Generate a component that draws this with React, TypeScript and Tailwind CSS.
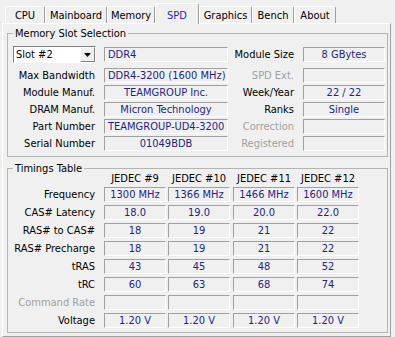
import React from "react";

const VAL = "text-[#1e1e8c]";
const SUNK = "border border-t-[#a0a0a0] border-l-[#a0a0a0] border-b-white border-r-white";

function Field({ className = "", left = false, children }: { className?: string; left?: boolean; children?: React.ReactNode }) {
  return (
    <div className={`h-[15px] ${SUNK} ${VAL} leading-[13px] whitespace-nowrap overflow-hidden ${left ? "pl-[3px] text-left" : "text-center"} ${className}`}>
      {children}
    </div>
  );
}

function Label({ className = "", dim = false, children }: { className?: string; dim?: boolean; children?: React.ReactNode }) {
  return (
    <div className={`leading-[15px] text-right whitespace-nowrap ${dim ? "text-[#a0a0a0]" : "text-black"} ${className}`}>{children}</div>
  );
}

const tabs = [
  { name: "CPU", w: "w-[40px]" },
  { name: "Mainboard", w: "w-[62px]" },
  { name: "Memory", w: "w-[48px]" },
  { name: "SPD", w: "w-[44px]", sel: true },
  { name: "Graphics", w: "w-[53px]" },
  { name: "Bench", w: "w-[42px]" },
  { name: "About", w: "w-[42px]" },
];

const slotRows = [
  { l: "Max Bandwidth", v: "DDR4-3200 (1600 MHz)", left: true, r: "SPD Ext.", rv: "", rdim: true },
  { l: "Module Manuf.", v: "TEAMGROUP Inc.", r: "Week/Year", rv: "22 / 22" },
  { l: "DRAM Manuf.", v: "Micron Technology", r: "Ranks", rv: "Single" },
  { l: "Part Number", v: "TEAMGROUP-UD4-3200", left: true, r: "Correction", rv: "", rdim: true },
  { l: "Serial Number", v: "01049BDB", r: "Registered", rv: "", rdim: true },
];

const timing = [
  { l: "Frequency", v: ["1300 MHz", "1366 MHz", "1466 MHz", "1600 MHz"] },
  { l: "CAS# Latency", v: ["18.0", "19.0", "20.0", "22.0"] },
  { l: "RAS# to CAS#", v: ["18", "19", "21", "22"] },
  { l: "RAS# Precharge", v: ["18", "19", "21", "22"] },
  { l: "tRAS", v: ["43", "45", "48", "52"] },
  { l: "tRC", v: ["60", "63", "68", "74"] },
  { l: "Command Rate", v: ["", "", "", ""], dim: true },
  { l: "Voltage", v: ["1.20 V", "1.20 V", "1.20 V", "1.20 V"] },
];

const colMl = ["ml-[9px]", "ml-[2px]", "ml-[3px]", "ml-[2px]"];

export default function App() {
  return (
    <div className="w-[395px] h-[337px] overflow-hidden bg-[#f0f0f0] font-['DejaVu_Sans_Condensed','Liberation_Sans',sans-serif] text-[11px] leading-[13px] text-black">
      {/* Tabs */}
      <div className="h-[23px] flex items-end pl-[5px]">
        {tabs.map((t) =>
          t.sel ? (
            <div
              key={t.name}
              className={`${t.w} relative z-10 h-[21px] -mb-[1px] bg-[#f0f0f0] border-l border-t border-r border-l-white border-t-white border-r-[#a0a0a0] rounded-t-[2px] pt-[5px] text-center text-[#1e1ec8]`}
            >
              {t.name}
            </div>
          ) : (
            <div
              key={t.name}
              className={`${t.w} h-[17px] bg-[#f0f0f0] border-l border-t border-r border-l-white border-t-white border-r-[#a0a0a0] rounded-t-[2px] pt-[2px] text-center`}
            >
              {t.name}
            </div>
          )
        )}
      </div>

      {/* Panel */}
      <div className="ml-[2px] w-[389px] h-[314px] border border-t-white border-l-white border-r-[#a0a0a0] border-b-[#a0a0a0] pl-[4px] pt-[3px]">
        {/* Memory Slot Selection */}
        <fieldset className="w-[381px] border border-[#b4b4b4] pb-[5px]">
          <legend className="ml-[5px] px-[2px] leading-[13px]">Memory Slot Selection</legend>
          <div className="mt-[6px] h-[17px] flex items-center">
            <div className="ml-[5px] w-[83px] h-[17px] bg-white border border-t-[#808080] border-l-[#808080] border-b-white border-r-white flex items-center">
              <div className="flex-1 pl-[2px] leading-[13px]">Slot #2</div>
              <div className="w-[15px] h-[15px] bg-[#f0f0f0] border border-t-white border-l-white border-b-[#808080] border-r-[#808080] flex items-center justify-center">
                <svg width="7" height="4" viewBox="0 0 7 4">
                  <path d="M0 0h7L3.5 4z" fill="#000" />
                </svg>
              </div>
            </div>
            <Field className="ml-[8px] w-[124px]" left>DDR4</Field>
            <Label className="w-[66px]">Module Size</Label>
            <Field className="ml-[9px] w-[82px]">8 GBytes</Field>
          </div>
          {slotRows.map((r, i) => (
            <div key={r.l} className={`${i === 0 ? "mt-[5px]" : "mt-[2px]"} h-[15px] flex items-center`}>
              <Label className="w-[87px]">{r.l}</Label>
              <Field className="ml-[9px] w-[124px]" left={r.left}>{r.v}</Field>
              <Label className="w-[66px]" dim={r.rdim}>{r.r}</Label>
              <Field className="ml-[9px] w-[82px]">{r.rv}</Field>
            </div>
          ))}
        </fieldset>

        {/* Timings Table */}
        <fieldset className="mt-[5px] w-[381px] border border-[#b4b4b4] pb-[4px]">
          <legend className="ml-[5px] px-[2px] leading-[13px]">Timings Table</legend>
          <div className="-mt-[3px] h-[13px] flex">
            <div className="w-[87px]" />
            {["JEDEC #9", "JEDEC #10", "JEDEC #11", "JEDEC #12"].map((h, i) => (
              <div key={h} className={`${colMl[i]} w-[62px] text-center whitespace-nowrap`}>{h}</div>
            ))}
          </div>
          {timing.map((r, ri) => (
            <div key={r.l} className={`${ri === 0 ? "mt-[2px]" : "mt-[3px]"} h-[15px] flex items-center`}>
              <Label className="w-[87px]" dim={r.dim}>{r.l}</Label>
              {r.v.map((v, i) => (
                <Field key={i} className={`${colMl[i]} w-[62px]`}>{v}</Field>
              ))}
            </div>
          ))}
        </fieldset>
      </div>
    </div>
  );
}
